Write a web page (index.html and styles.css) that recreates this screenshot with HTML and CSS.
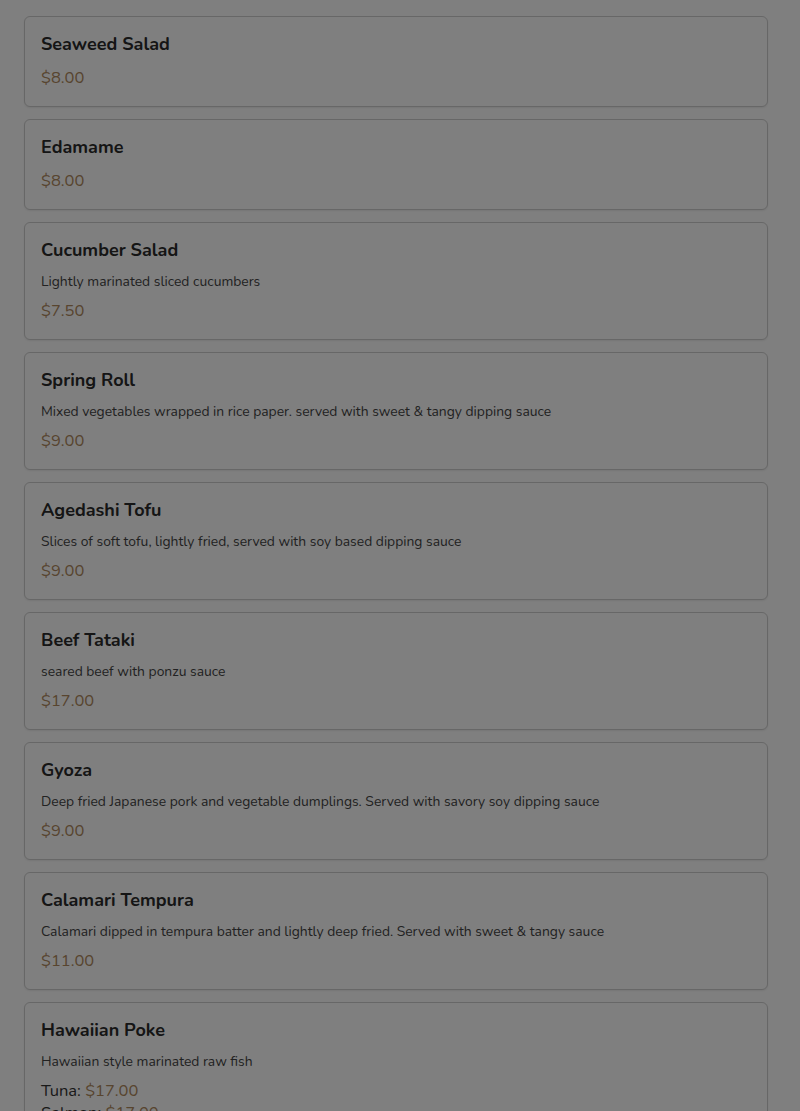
FILE: index.html
```html
<!DOCTYPE html>
<html lang="en">
<head>
<meta charset="utf-8">
<title>Menu</title>
<link rel="stylesheet" href="styles.css">
</head>
<body>
<main class="menu">
  <section class="item">
    <h3 class="item-name">Seaweed Salad</h3>
    <div class="price">$8.00</div>
  </section>
  <section class="item">
    <h3 class="item-name">Edamame</h3>
    <div class="price">$8.00</div>
  </section>
  <section class="item">
    <h3 class="item-name">Cucumber Salad</h3>
    <p class="desc">Lightly marinated sliced cucumbers</p>
    <div class="price">$7.50</div>
  </section>
  <section class="item">
    <h3 class="item-name">Spring Roll</h3>
    <p class="desc">Mixed vegetables wrapped in rice paper. served with sweet &amp; tangy dipping sauce</p>
    <div class="price">$9.00</div>
  </section>
  <section class="item">
    <h3 class="item-name">Agedashi Tofu</h3>
    <p class="desc">Slices of soft tofu, lightly fried, served with soy based dipping sauce</p>
    <div class="price">$9.00</div>
  </section>
  <section class="item">
    <h3 class="item-name">Beef Tataki</h3>
    <p class="desc">seared beef with ponzu sauce</p>
    <div class="price">$17.00</div>
  </section>
  <section class="item">
    <h3 class="item-name">Gyoza</h3>
    <p class="desc">Deep fried Japanese pork and vegetable dumplings. Served with savory soy dipping sauce</p>
    <div class="price">$9.00</div>
  </section>
  <section class="item">
    <h3 class="item-name">Calamari Tempura</h3>
    <p class="desc">Calamari dipped in tempura batter and lightly deep fried. Served with sweet &amp; tangy sauce</p>
    <div class="price">$11.00</div>
  </section>
  <section class="item">
    <h3 class="item-name">Hawaiian Poke</h3>
    <p class="desc">Hawaiian style marinated raw fish</p>
    <div class="price"><span class="label">Tuna:</span> $17.00</div>
    <div class="price"><span class="label">Salmon:</span> $17.00</div>
  </section>
</main>
<div class="backdrop"></div>
</body>
</html>
```
FILE: styles.css
```css
html, body {
  margin: 0;
  padding: 0;
  background: #ffffff;
  font-family: Nunito, Lato, "Open Sans", sans-serif;
  color: #333333;
}
.menu {
  display: flex;
  flex-direction: column;
  gap: 12px;
  padding: 16px 32px 24px 24px;
}
.item {
  border: 1px solid #cfcfcf;
  border-radius: 6px;
  padding: 17px 16px 16px;
  background: #ffffff;
  box-shadow: 0 1px 2px rgba(0,0,0,0.08);
}
.item-name {
  margin: 0 0 12px;
  font-size: 18px;
  line-height: 20px;
  font-weight: 700;
  color: #2a2a2a;
}
.desc {
  margin: 0 0 7px;
  font-size: 13.875px;
  line-height: 20px;
  color: #444444;
}
.price {
  font-size: 16.5px;
  line-height: 24px;
  color: #b08a5e;
}
.price + .price {
  margin-top: -2px;
}
.label {
  color: #333333;
}
.backdrop {
  position: fixed;
  inset: 0;
  background: rgba(0,0,0,0.5);
}
```
